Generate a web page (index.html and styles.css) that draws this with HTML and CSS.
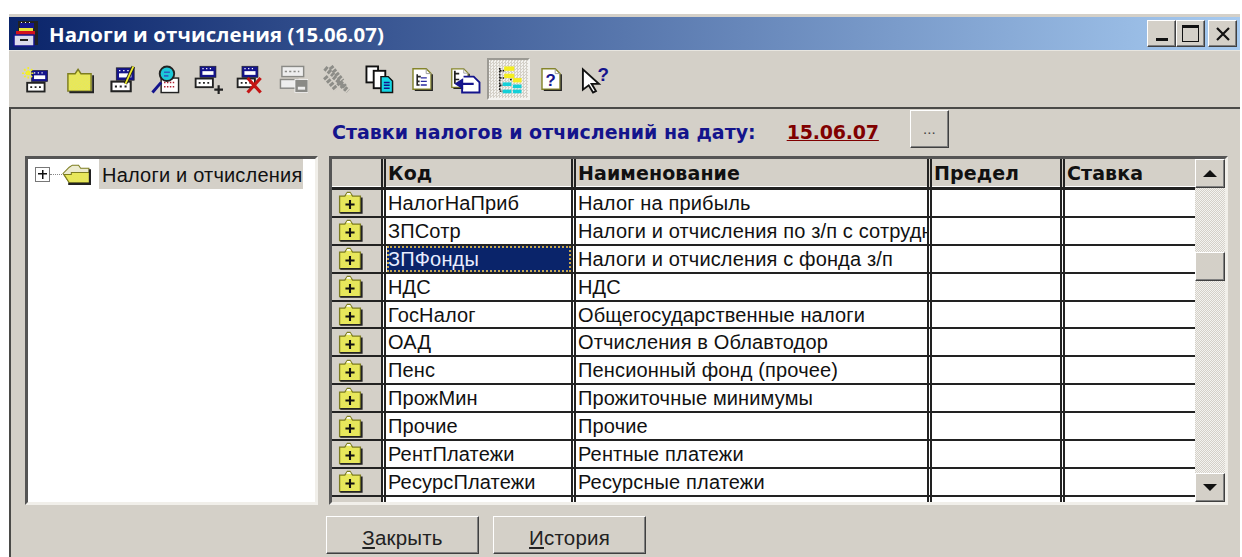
FILE: index.html
```html
<!DOCTYPE html>
<html lang="ru">
<head>
<meta charset="utf-8">
<title>Налоги и отчисления</title>
<link rel="stylesheet" href="styles.css">
</head>
<body>
<svg class="defs" width="0" height="0" aria-hidden="true">
  <defs>
    <pattern id="dither" width="2" height="2" patternUnits="userSpaceOnUse">
      <rect width="2" height="2" fill="#f8f82c"/>
      <rect width="1" height="1" fill="#d6d68c"/>
      <rect x="1" y="1" width="1" height="1" fill="#d6d68c"/>
    </pattern>
    <symbol id="records" viewBox="0 0 20 20">
      <rect x="6" y="1" width="13" height="9" fill="#14148c" stroke="#222" stroke-width=".5"/>
      <rect x="8" y="5" width="9" height="3" fill="#fff"/>
      <path d="M8 3h1M11 3h1M14 3h1M9 6.500h1M12 6.500h1M15 6.500h1" stroke="#fff" stroke-width="1"/>
      <rect x="2.500" y="11" width="14" height="7" fill="#fff" stroke="#222" stroke-width="1.500"/>
      <path d="M5 14.500h1.500M8.500 14.500h1.500M12 14.500h1.500" stroke="#222" stroke-width="1.500"/>
    </symbol>
    <symbol id="records-grey" viewBox="0 0 20 20">
      <rect x="2" y="1" width="15" height="7" fill="#eee" stroke="#8a8a86"/>
      <path d="M4 4.500h10" stroke="#8a8a86" stroke-dasharray="1.500 1.500"/>
      <rect x="1" y="10" width="12" height="6" fill="#eee" stroke="#8a8a86"/>
      <rect x="11" y="10" width="9" height="9" fill="#8a8a86" stroke="#fff" stroke-width=".5"/>
      <rect x="13" y="15" width="5" height="2" fill="#eee"/>
    </symbol>
    <symbol id="folder-plus" viewBox="0 0 20 18" preserveAspectRatio="none">
      <path d="M2 4h4l2-3h2l2 3h6v13H2z" fill="url(#dither)" stroke="#7d7d20"/>
      <path d="M7 3l1-1.500h2L11 3z" fill="#fff"/>
      <path d="M2.500 17.200H19V5" fill="none" stroke="#222" stroke-width="1.400"/>
      <path d="M6.500 10.500h7M10 7v7" stroke="#111" stroke-width="1.600"/>
    </symbol>
    <symbol id="page" viewBox="0 0 20 20">
      <path d="M2.500 1.500h11l4 4v13h-15z" fill="#fff" stroke="#85852a" stroke-width="1.200"/>
      <path d="M13.500 1.500v4h4" fill="none" stroke="#999" stroke-width=".8"/>
      <path d="M18.500 6v13.500H4" fill="none" stroke="#222" stroke-width="1.200"/>
    </symbol>
  </defs>
</svg>

<div class="window">
  <header class="titlebar">
    <svg class="title-icon" viewBox="0 0 28 28">
      <rect x="6" y="1" width="20" height="24" fill="#222"/>
      <rect x="8" y="3" width="14" height="6" fill="#14148c"/>
      <path d="M9 2.500h1M13 2.500h1M17 2.500h1" stroke="#eee"/>
      <rect x="7" y="8" width="14" height="3" fill="#e8e23c"/>
      <rect x="4" y="11" width="19" height="4" fill="#d3121c"/>
      <rect x="2" y="15" width="20" height="11" fill="#dcdcec" stroke="#14148c" stroke-width="1.500"/>
      <rect x="8" y="19" width="8" height="2" fill="#222"/>
    </svg>
    <h1 class="title-text">Налоги и отчисления (15.06.07)</h1>
    <div class="caption-buttons">
      <button class="caption-btn" type="button" aria-label="Свернуть"><span class="glyph-min"></span></button>
      <button class="caption-btn" type="button" aria-label="Развернуть"><span class="glyph-max"></span></button>
      <button class="caption-btn caption-close" type="button" aria-label="Закрыть">
        <svg viewBox="0 0 16 14" width="16" height="14"><path d="M2 1l12 12M14 1L2 13" stroke="#111" stroke-width="2.200"/></svg>
      </button>
    </div>
  </header>

  <nav class="toolbar">
    <span class="tool">
      <svg class="icon" viewBox="0 0 28 28">
        <use href="#records" x="2" y="4" width="24" height="24"/>
        <path d="M6 2v12M0 8h12M2 4l8 8M10 4l-8 8" stroke="#f2ee2c" stroke-width="1.600" stroke-dasharray="2 1"/>
      </svg>
    </span>
    <span class="tool">
      <svg class="icon" viewBox="0 0 20 20"><path d="M2 6h5l2-3 2 3h7v12H2z" fill="url(#dither)" stroke="#7d7d20"/><path d="M3 18.800h16.500V7" fill="none" stroke="#222" stroke-width="1.500"/></svg>
    </span>
    <span class="tool">
      <svg class="icon" viewBox="0 0 20 20">
        <use href="#records" width="19" height="19" y="1"/>
        <path d="M17.500 1L12 13" stroke="#222" stroke-width="2.500"/>
        <path d="M17.500 1L12 13" stroke="#f2ee2c" stroke-width="1.200"/>
      </svg>
    </span>
    <span class="tool">
      <svg class="icon" viewBox="0 0 20 20">
        <rect x="7" y="9" width="12" height="10" fill="#fff" stroke="#222"/>
        <path d="M9 12h8M9 15h8" stroke="#b02030" stroke-dasharray="1 1"/>
        <path d="M1 19l6-7" stroke="#14148c" stroke-width="2"/>
        <circle cx="11" cy="6" r="5" fill="#1cc8d8" stroke="#222" stroke-width="1.300"/>
        <path d="M9 5h4M9 7.500h3" stroke="#3060c0" stroke-width="1.200"/>
      </svg>
    </span>
    <span class="tool">
      <svg class="icon" viewBox="0 0 20 20">
        <use href="#records" width="17" height="17" x="-1"/>
        <path d="M14 17h6M17 14v6" stroke="#222" stroke-width="1.500"/>
      </svg>
    </span>
    <span class="tool">
      <svg class="icon" viewBox="0 0 20 20">
        <use href="#records" width="17" height="17" x="-1"/>
        <path d="M8 9l9 10M17 9L8 19" stroke="#c41414" stroke-width="2.200"/>
      </svg>
    </span>
    <span class="tool"><svg class="icon" viewBox="0 0 20 20"><use href="#records-grey" width="20" height="20"/></svg></span>
    <span class="tool">
      <svg class="icon" viewBox="0 0 20 20">
        <path d="M2 2l6 5M6 1l8 10M2 8l8 9M8 8l8 7M11 12l7 6" stroke="#8d8d88" stroke-width="3.400" stroke-dasharray="2 1"/>
      </svg>
    </span>
    <span class="tool">
      <svg class="icon" viewBox="0 0 20 20">
        <rect x="1" y="1" width="8" height="11" fill="#fff" stroke="#111" stroke-width="1.300"/>
        <rect x="6" y="4" width="8" height="12" fill="#fff" stroke="#111" stroke-width="1.300"/>
        <path d="M11 8h5l3 3v8h-8z" fill="#16d6e4" stroke="#111"/>
        <path d="M13 12h4M13 14h4M13 16h4" stroke="#14148c"/>
      </svg>
    </span>
    <span class="tool">
      <svg class="icon icon-page" viewBox="0 0 20 20">
        <use href="#page" width="20" height="20"/>
        <path d="M6 6v9h2M6 8h3M6 12h2" fill="none" stroke="#222" stroke-width="1.300"/>
        <path d="M9 9h5M9 12h5M9 15h5" stroke="#2a2aa0" stroke-width="1.100"/>
      </svg>
    </span>
    <span class="tool">
      <svg class="icon icon-wide" viewBox="0 0 22 20">
        <use href="#page" width="15" height="18"/>
        <path d="M4 4v9M4 6h3M4 10h3" fill="none" stroke="#222" stroke-width="1.200"/>
        <path d="M10 8h7l4 4v7H9v-4" fill="#fff" stroke="#14148c" stroke-width="1.300"/>
        <path d="M17 13H6M9 10.500L5 13l4 2.500z" fill="#14148c" stroke="#14148c" stroke-width="1.500"/>
      </svg>
    </span>
    <span class="tool tool-on">
      <svg class="icon" viewBox="0 0 20 20">
        <path d="M4 2v16M4 4h3M4 9h3M4 14h3M4 18h3M11 10h2" fill="none" stroke="#111" stroke-dasharray="1.200 .8"/>
        <rect x="7" y="1" width="7" height="3" fill="#f4ee20"/>
        <rect x="7" y="6" width="7" height="3" fill="#f4ee20"/>
        <rect x="13" y="9" width="6" height="3" fill="#f4ee20"/>
        <rect x="6" y="12" width="6" height="2.500" fill="#14d0d8"/>
        <rect x="6" y="17" width="6" height="2.500" fill="#14d0d8"/>
        <rect x="13" y="13.500" width="6" height="2.500" fill="#14d0d8"/>
        <rect x="13" y="17" width="6" height="2.500" fill="#14d0d8"/>
      </svg>
    </span>
    <span class="tool">
      <svg class="icon icon-page" viewBox="0 0 20 20">
        <use href="#page" width="20" height="20"/>
        <text class="help-mark" x="5.500" y="15.500">?</text>
      </svg>
    </span>
    <span class="tool">
      <svg class="icon" viewBox="0 0 20 20">
        <path d="M2 3v14l4-3 3 5 2-1-3-5h5z" fill="#fff" stroke="#111" stroke-width="1.300"/>
        <text class="help-mark help-small" x="12" y="11">?</text>
      </svg>
    </span>
  </nav>

  <main class="content">
    <div class="rate-line">
      <span class="rate-label">Ставки налогов и отчислений на дату:</span>
      <span class="rate-date">15.06.07</span>
      <button class="raised dots" type="button">...</button>
    </div>

    <div class="panes">
      <div class="tree">
        <div class="tree-node">
          <span class="tree-plus"></span>
          <span class="tree-dots"></span>
          <svg class="tree-folder" viewBox="0 0 28 20">
            <path d="M7 3l3-2h6l2 3h8v14H7L1 9z" fill="#ecebd0" stroke="#7d7d20"/>
            <path d="M9 8h18v10H7L2 10h7z" fill="url(#dither)" stroke="#7d7d20"/>
            <path d="M6 19h21V5" fill="none" stroke="#222" stroke-width="2.200"/>
          </svg>
          <span class="tree-label">Налоги и отчисления</span>
        </div>
      </div>

      <div class="grid-frame">
        <div class="grid">
          <div class="row head">
            <div class="cell cell-mark"></div>
            <div class="cell">Код</div>
            <div class="cell">Наименование</div>
            <div class="cell">Предел</div>
            <div class="cell">Ставка</div>
          </div>
          <div class="row"><div class="cell cell-mark"><svg class="row-icon"><use href="#folder-plus"/></svg></div><div class="cell">НалогНаПриб</div><div class="cell">Налог на прибыль</div><div class="cell"></div><div class="cell"></div></div>
          <div class="row"><div class="cell cell-mark"><svg class="row-icon"><use href="#folder-plus"/></svg></div><div class="cell">ЗПСотр</div><div class="cell">Налоги и отчисления по з/п с сотрудников</div><div class="cell"></div><div class="cell"></div></div>
          <div class="row"><div class="cell cell-mark"><svg class="row-icon"><use href="#folder-plus"/></svg></div><div class="cell"><span class="focused">ЗПФонды</span></div><div class="cell">Налоги и отчисления с фонда з/п</div><div class="cell"></div><div class="cell"></div></div>
          <div class="row"><div class="cell cell-mark"><svg class="row-icon"><use href="#folder-plus"/></svg></div><div class="cell">НДС</div><div class="cell">НДС</div><div class="cell"></div><div class="cell"></div></div>
          <div class="row"><div class="cell cell-mark"><svg class="row-icon"><use href="#folder-plus"/></svg></div><div class="cell">ГосНалог</div><div class="cell">Общегосударственные налоги</div><div class="cell"></div><div class="cell"></div></div>
          <div class="row"><div class="cell cell-mark"><svg class="row-icon"><use href="#folder-plus"/></svg></div><div class="cell">ОАД</div><div class="cell">Отчисления в Облавтодор</div><div class="cell"></div><div class="cell"></div></div>
          <div class="row"><div class="cell cell-mark"><svg class="row-icon"><use href="#folder-plus"/></svg></div><div class="cell">Пенс</div><div class="cell">Пенсионный фонд (прочее)</div><div class="cell"></div><div class="cell"></div></div>
          <div class="row"><div class="cell cell-mark"><svg class="row-icon"><use href="#folder-plus"/></svg></div><div class="cell">ПрожМин</div><div class="cell">Прожиточные минимумы</div><div class="cell"></div><div class="cell"></div></div>
          <div class="row"><div class="cell cell-mark"><svg class="row-icon"><use href="#folder-plus"/></svg></div><div class="cell">Прочие</div><div class="cell">Прочие</div><div class="cell"></div><div class="cell"></div></div>
          <div class="row"><div class="cell cell-mark"><svg class="row-icon"><use href="#folder-plus"/></svg></div><div class="cell">РентПлатежи</div><div class="cell">Рентные платежи</div><div class="cell"></div><div class="cell"></div></div>
          <div class="row"><div class="cell cell-mark"><svg class="row-icon"><use href="#folder-plus"/></svg></div><div class="cell">РесурсПлатежи</div><div class="cell">Ресурсные платежи</div><div class="cell"></div><div class="cell"></div></div>
          <div class="row row-tail"><div class="cell cell-mark"></div><div class="cell"></div><div class="cell"></div><div class="cell"></div><div class="cell"></div></div>
        </div>
        <div class="scrollbar">
          <button class="raised scroll-btn" type="button" aria-label="Вверх"><span class="arrow-up"></span></button>
          <div class="scroll-track"><span class="raised scroll-thumb"></span></div>
          <button class="raised scroll-btn" type="button" aria-label="Вниз"><span class="arrow-down"></span></button>
        </div>
      </div>
    </div>

    <div class="actions">
      <button class="raised action" type="button"><u>З</u>акрыть</button>
      <button class="raised action" type="button"><u>И</u>стория</button>
    </div>
  </main>
</div>
</body>
</html>
```

FILE: styles.css
```css
* { box-sizing: border-box; }

html, body { height: 100%; }

body {
  margin: 0;
  background: #fff;
  overflow: hidden;
  font-family: "Liberation Sans", Arial, sans-serif;
  color: #111;
}

.defs { position: absolute; }

button {
  font-family: inherit;
  color: inherit;
  padding: 0;
  margin: 0;
}

.window {
  height: 543px;
  margin: 14px 2px 0 9px;
  display: flex;
  flex-direction: column;
  background: #d4d0c8;
  padding-top: 3px;
}

/* Title bar */
.titlebar {
  flex: none;
  height: 34px;
  display: flex;
  align-items: center;
  background: linear-gradient(90deg, #0a246a 0%, #a6caf0 100%);
  padding: 0 3px 0 3px;
  border-bottom: 1px solid #e8e6e0;
}

.title-icon { width: 28px; height: 28px; flex: none; }

.title-text {
  margin: 0 0 0 9px;
  font: bold 20.400px "Open Sans", "DejaVu Sans", sans-serif;
  color: #fff;
  letter-spacing: .1px;
  white-space: nowrap;
}

.caption-buttons {
  margin-left: auto;
  display: flex;
  align-items: center;
}

.caption-btn {
  width: 29px;
  height: 27px;
  background: #d4d0c8;
  border: 1px solid;
  border-color: #fff #404040 #404040 #fff;
  box-shadow: inset -1px -1px 0 #808080;
  display: flex;
  align-items: center;
  justify-content: center;
}

.caption-close { margin-left: 3px; }

.glyph-min {
  width: 12px;
  height: 3px;
  background: #111;
  margin-top: 12px;
}

.glyph-max {
  width: 17px;
  height: 17px;
  border: 1px solid #111;
  border-top-width: 3px;
}

/* Toolbar */
.toolbar {
  flex: none;
  height: 56px;
  display: flex;
  align-items: center;
  padding: 0 0 0 6px;
}

.tool {
  width: 42.900px;
  height: 42px;
  flex: none;
  display: flex;
  align-items: center;
  justify-content: center;
}

.tool-on {
  border: 2px solid;
  border-color: #9c9a94 #f4f3f0 #f4f3f0 #9c9a94;
  background: repeating-conic-gradient(#d4d0c8 0 25%, #f4f3f0 0 50%) 0 0 / 3px 3px;
}

.icon { width: 29px; height: 29px; display: block; }
.icon-page { width: 24px; height: 26px; }
.icon-wide { width: 32px; height: 29px; }

.help-mark {
  font: bold 14px "Liberation Sans", sans-serif;
  fill: #14148c;
}

.help-small { font-size: 13px; }

/* Main area */
.content {
  flex: 1;
  min-height: 0;
  display: flex;
  flex-direction: column;
  border-top: 2px solid #4a4a48;
  border-left: 2px solid #4a4a48;
  padding-left: 14px;
}

.rate-line {
  flex: none;
  height: 47px;
  display: flex;
  align-items: center;
  padding: 0 0 2px 307px;
}

.rate-label {
  font: bold 19px "DejaVu Sans", sans-serif;
  color: #14148c;
  white-space: nowrap;
}

.rate-date {
  margin-left: 31px;
  font: bold 19px "DejaVu Sans", sans-serif;
  color: #800000;
  text-decoration: underline;
  letter-spacing: -.2px;
}

.raised {
  background: #d4d0c8;
  border: 1px solid;
  border-color: #fff #404040 #404040 #fff;
  box-shadow: inset -1px -1px 0 #808080;
}

.dots {
  margin: 0 0 6px 31px;
  width: 39px;
  height: 38px;
  font-size: 15px;
  color: #444;
}

.panes {
  flex: none;
  height: 349px;
  display: flex;
  gap: 11px;
}

/* Tree */
.tree {
  width: 293px;
  background: #fff;
  border: 3px solid;
  border-color: #555 #f1efea #f1efea #555;
}

.tree-node {
  display: flex;
  align-items: center;
  height: 30px;
  padding-left: 7px;
}

.tree-plus {
  width: 15px;
  height: 15px;
  flex: none;
  border: 1px solid #777;
  background:
    linear-gradient(#111, #111) center / 9px 1.500px no-repeat,
    linear-gradient(#111, #111) center / 1.500px 9px no-repeat,
    #fff;
}

.tree-dots {
  width: 12px;
  flex: none;
  border-top: 1px dotted #888;
}

.tree-folder { width: 29px; height: 21px; flex: none; }

.tree-label {
  margin-left: 8px;
  height: 30px;
  flex: none;
  width: 204px;
  padding-left: 3px;
  background: #d4d0c8;
  font-size: 20px;
  letter-spacing: .2px;
  line-height: 33px;
  white-space: nowrap;
}

/* Table */
.grid-frame {
  width: 899px;
  display: flex;
  background: #fff;
  border: 3px solid;
  border-color: #555 #f1efea #f1efea #555;
  overflow: hidden;
}

.grid { width: 863px; flex: none; overflow: hidden; }

.row {
  display: grid;
  grid-template-columns: 49px 190px 356px 133px 135px;
  grid-template-rows: minmax(0, 1fr);
  height: 27.900px;
  border-bottom: 2px solid #222;
}

.row.head { height: 31px; border-bottom-width: 3px; font-weight: bold; }

.row-tail { border-bottom: 0; }

.cell {
  min-height: 0;
  border-left: 5px double #222;
  padding: 0 0 0 2px;
  font-size: 20px;
  letter-spacing: .15px;
  line-height: 26px;
  white-space: nowrap;
  overflow-x: clip;
  background: #fff;
}

.head .cell {
  background: #d4d0c8;
  font: bold 19px/28px "DejaVu Sans", sans-serif;
  letter-spacing: .1px;
  box-shadow: inset 0 -1px 0 #fff;
}

.cell-mark {
  border-left: 0;
  padding: 0 0 0 5px;
  background: #d4d0c8;
  display: flex;
  align-items: center;
}

.row-icon { width: 26px; height: 23px; display: block; }

.focused {
  display: block;
  margin-left: -1px;
  height: 26px;
  line-height: 26px;
  padding-left: 1px;
  background: #0a246a;
  color: #e8ecff;
  outline: 2px dotted #c8a850;
  outline-offset: -2px;
}

/* Scrollbar */
.scrollbar {
  width: 30px;
  flex: none;
  display: flex;
  flex-direction: column;
  background: repeating-conic-gradient(#d4d0c8 0 25%, #f4f3f0 0 50%) 0 0 / 2px 2px;
}

.scroll-btn {
  width: 100%;
  height: 29px;
  flex: none;
  display: flex;
  align-items: center;
  justify-content: center;
}

.scroll-track { flex: 1; padding-top: 64px; }

.scroll-thumb { display: block; width: 100%; height: 29px; }

.arrow-up, .arrow-down {
  width: 0;
  height: 0;
  border-left: 7px solid transparent;
  border-right: 7px solid transparent;
}

.arrow-up { border-bottom: 7px solid #111; }
.arrow-down { border-top: 7px solid #111; }

/* Buttons under the panes */
.actions {
  flex: none;
  display: flex;
  gap: 14px;
  padding: 11px 0 0 301px;
}

.action {
  width: 153px;
  height: 38px;
  padding-top: 5px;
  font-size: 20.500px;
  letter-spacing: .2px;
  color: #222;
}
```
